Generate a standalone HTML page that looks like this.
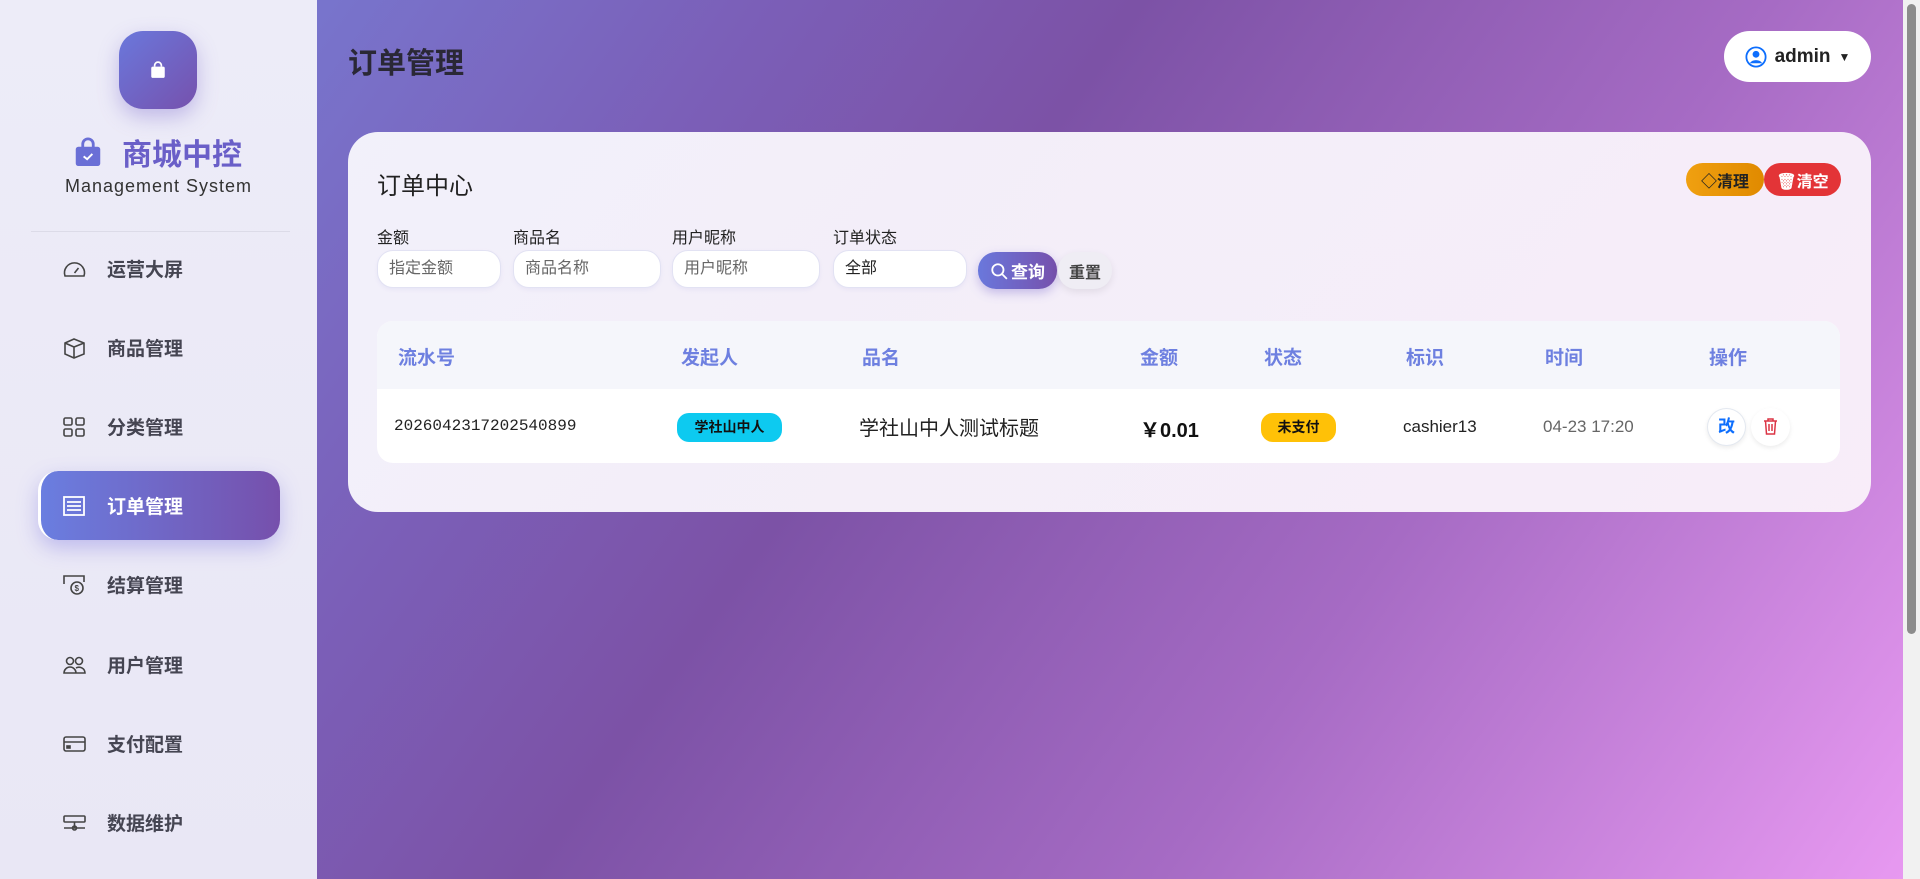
<!DOCTYPE html>
<html><head><meta charset="utf-8"><style>
*{box-sizing:border-box;margin:0;padding:0}
body{width:1920px;height:879px;overflow:hidden;font-family:"Liberation Sans","Noto Sans CJK SC",sans-serif;position:relative;background:linear-gradient(125deg,#7684db 0%,#7b5fb8 30%,#7c52a6 45%,#a66bc4 70%,#e99af2 100%)}
.sb{position:absolute;left:0;top:0;width:317px;height:879px;background:linear-gradient(180deg,#edecf8,#e9e7f5);}
.logo{position:absolute;left:119px;top:31px;width:78px;height:78px;border-radius:24px;background:linear-gradient(135deg,#6a78dc,#7651ad);box-shadow:0 8px 20px rgba(110,90,200,.35)}
.brand{position:absolute;left:74px;top:130px;font-size:30px;font-weight:bold;color:#6a5fc8;display:flex;align-items:center;gap:20px}
.sub{position:absolute;left:0;width:317px;text-align:center;top:176px;font-size:18px;color:#333;letter-spacing:1px}
.div{position:absolute;left:31px;width:259px;top:231px;height:1px;background:#dcdbe8}
.nav{position:absolute;left:38px;width:242px;height:69px;display:flex;align-items:center;font-size:19px;font-weight:bold;color:#454552}
.nav svg{position:absolute;left:24px}
.nav span{position:absolute;left:69px}
.nav.act{background:linear-gradient(90deg,#6a7ee0,#7650ac);color:#fff;border-radius:20px;box-shadow:0 8px 20px rgba(110,100,220,.35);border-left:3px solid #fff}
h1{position:absolute;left:348px;top:40px;font-size:29px;font-weight:bold;color:#2a2836}
.admin{position:absolute;left:1724px;top:31px;width:147px;height:51px;background:#fff;border-radius:26px;display:flex;align-items:center;justify-content:center;gap:8px;font-size:19px;color:#222;font-weight:bold}
.card{position:absolute;left:348px;top:132px;width:1523px;height:380px;border-radius:30px;background:linear-gradient(135deg,rgba(246,245,252,.97),rgba(249,240,250,.97))}
.ct{position:absolute;left:29px;top:34px;font-size:24px;color:#222}
.btn{position:absolute;top:31px;height:33px;border-radius:17px;color:#fff;font-size:16px;font-weight:bold;display:flex;align-items:center;justify-content:center;gap:3px}
.lbl{position:absolute;top:92px;font-size:16px;color:#222}
.inp{position:absolute;top:118px;height:38px;border-radius:16px;background:#fff;border:1px solid #e2e2f3;font-size:16px;color:#666;padding-left:11px;line-height:36px;box-shadow:0 2px 4px rgba(120,110,200,.08)}
.tbl{position:absolute;left:29px;top:189px;width:1463px;height:142px;border-radius:16px;overflow:hidden;background:#fff}
.th{position:absolute;top:0;left:0;right:0;height:68px;background:#f5f6fb}
.th div,.tr div{position:absolute}
.th div{top:22px;font-size:19px;font-weight:bold;color:#6e80e0}
.tr{position:absolute;top:68px;left:0;right:0;height:74px}
</style></head><body>
<div class="sb">
 <div class="logo"><svg style="position:absolute;left:30px;top:30px" width="18" height="18" viewBox="0 0 16 16"><path d="M5 5V4a3 3 0 0 1 6 0v1" fill="none" stroke="#fff" stroke-width="1.5"/><rect x="2" y="5" width="12" height="10" rx="1.5" fill="#fff"/></svg></div>
 <div class="brand"><svg width="28" height="30" viewBox="0 0 16 17"><path d="M5 6V4a3 3 0 0 1 6 0v2" fill="none" stroke="#6a6fd6" stroke-width="1.6"/><rect x="1" y="5.5" width="14" height="11" rx="1.5" fill="#6a6fd6"/><path d="M5.5 11l2 1.6 3-3" fill="none" stroke="#fff" stroke-width="1.1"/></svg><span>商城中控</span></div>
 <div class="sub">Management System</div>
 <div class="div"></div>
 <div class="nav" style="top:234px"><svg width="25" height="20" viewBox="0 0 25 20" fill="none" stroke="#444" stroke-width="1.6"><path d="M3 17a10 10 0 1 1 19 0z"/><path d="M12.5 14l4-5"/></svg><span>运营大屏</span></div>
 <div class="nav" style="top:313px"><svg width="25" height="22" viewBox="0 0 25 22" fill="none" stroke="#444" stroke-width="1.6"><path d="M3 6l9-4 10 4v11l-10 4-9-4z M3 6l9 4 10-4 M12 10v11"/></svg><span>商品管理</span></div>
 <div class="nav" style="top:392px"><svg width="24" height="22" viewBox="0 0 24 22" fill="none" stroke="#444" stroke-width="1.6"><rect x="2" y="2" width="8" height="7" rx="1.5"/><rect x="14" y="2" width="8" height="7" rx="1.5"/><rect x="2" y="13" width="8" height="7" rx="1.5"/><rect x="14" y="13" width="8" height="7" rx="1.5"/></svg><span>分类管理</span></div>
 <div class="nav act" style="top:471px"><svg width="24" height="22" viewBox="0 0 24 22" fill="none" stroke="#fff" stroke-width="1.8" style="left:21px"><rect x="2" y="2" width="20" height="18"/><path d="M5 7h14M5 11h14M5 15h14"/></svg><span style="left:66px">订单管理</span></div>
 <div class="nav" style="top:550px"><svg width="25" height="24" viewBox="0 0 25 24" fill="none" stroke="#444" stroke-width="1.6"><path d="M2 11V3h20v6"/><circle cx="15" cy="15" r="6"/><text x="12.5" y="18" font-size="8" fill="#444" stroke="none">$</text></svg><span>结算管理</span></div>
 <div class="nav" style="top:630px"><svg width="25" height="20" viewBox="0 0 25 20" fill="none" stroke="#444" stroke-width="1.6"><circle cx="8" cy="6" r="3.5"/><circle cx="17" cy="6" r="3.5"/><path d="M2 18a6 6 0 0 1 12 0z M14 18h9a6 6 0 0 0-9-5"/></svg><span>用户管理</span></div>
 <div class="nav" style="top:709px"><svg width="25" height="20" viewBox="0 0 25 20" fill="none" stroke="#444" stroke-width="1.6"><rect x="2" y="3" width="21" height="14" rx="2"/><path d="M2 8h21"/><rect x="5" y="12" width="3" height="2" fill="#444"/></svg><span>支付配置</span></div>
 <div class="nav" style="top:788px"><svg width="25" height="20" viewBox="0 0 25 20" fill="none" stroke="#444" stroke-width="1.6"><rect x="2" y="3" width="21" height="6" rx="1"/><path d="M12.5 9v6M2 15h21"/><circle cx="12.5" cy="15" r="2"/></svg><span>数据维护</span></div>
</div>
<div style="position:absolute;left:1903px;top:0;width:17px;height:879px;background:#f1f1f1"><div style="margin:4px 4px;width:9px;height:630px;border-radius:5px;background:#8c8c8c"></div></div>
<h1>订单管理</h1>
<div class="admin"><svg width="22" height="22" viewBox="0 0 16 16"><circle cx="8" cy="8" r="7" fill="none" stroke="#0d6efd" stroke-width="1.3"/><circle cx="8" cy="6" r="2.5" fill="#0d6efd"/><path d="M3.5 12.5a5 4 0 0 1 9 0" fill="#0d6efd"/></svg>admin<span style="font-size:12px">▼</span></div>
<div class="card">
 <div class="ct">订单中心</div>
 <div class="btn" style="left:1338px;width:78px;background:linear-gradient(90deg,#f0a010,#e08a00);color:#222">◇清理</div>
 <div class="btn" style="left:1416px;width:77px;background:#e33437">🗑清空</div>
 <div class="lbl" style="left:29px">金额</div><div class="inp" style="left:29px;width:124px">指定金额</div>
 <div class="lbl" style="left:165px">商品名</div><div class="inp" style="left:165px;width:148px">商品名称</div>
 <div class="lbl" style="left:324px">用户昵称</div><div class="inp" style="left:324px;width:148px">用户昵称</div>
 <div class="lbl" style="left:485px">订单状态</div><div class="inp" style="left:485px;width:134px;color:#222">全部</div>
 <div class="btn" style="left:630px;top:120px;width:79px;height:37px;border-radius:18px;background:linear-gradient(90deg,#6a78dc,#7650ac);box-shadow:0 4px 10px rgba(110,90,200,.35);font-size:17px"><svg width="18" height="18" viewBox="0 0 16 16" fill="none" stroke="#fff" stroke-width="1.6"><circle cx="7" cy="7" r="5"/><path d="M11 11l4 4"/></svg>查询</div>
 <div class="btn" style="left:710px;top:120px;width:54px;height:37px;border-radius:18px;background:#efedf4;color:#444;font-size:16px;box-shadow:0 3px 8px rgba(0,0,0,.08)">重置</div>
 <div class="tbl">
  <div class="th"><div style="left:21px">流水号</div><div style="left:304px">发起人</div><div style="left:485px">品名</div><div style="left:763px">金额</div><div style="left:887px">状态</div><div style="left:1029px">标识</div><div style="left:1168px">时间</div><div style="left:1332px">操作</div></div>
  <div class="tr">
   <div style="left:17px;top:28px;font-family:'Liberation Mono',monospace;font-size:16px;color:#222">2026042317202540899</div>
   <div style="left:300px;top:24px;width:105px;height:29px;border-radius:12px;background:#0dcaf0;font-size:14px;font-weight:bold;color:#111;text-align:center;line-height:29px">学社山中人</div>
   <div style="left:482px;top:23px;font-size:20px;color:#222">学社山中人测试标题</div>
   <div style="left:763px;top:25px;font-size:20px;font-weight:bold;color:#111">￥0.01</div>
   <div style="left:884px;top:24px;width:75px;height:29px;border-radius:12px;background:#ffc107;font-size:14px;font-weight:bold;color:#111;text-align:center;line-height:29px">未支付</div>
   <div style="left:1026px;top:28px;font-size:17px;color:#222">cashier13</div>
   <div style="left:1166px;top:28px;font-size:17px;color:#666">04-23 17:20</div>
   <div style="left:1330px;top:19px;width:39px;height:38px;border-radius:50%;background:#fff;border:1px solid #e3e8f0;box-shadow:0 2px 5px rgba(0,0,0,.08);color:#0d6efd;font-weight:bold;font-size:17px;text-align:center;line-height:36px">改</div>
   <div style="left:1374px;top:19px;width:39px;height:38px;border-radius:50%;background:#fff;box-shadow:0 2px 5px rgba(0,0,0,.08)"><svg style="margin:10px 12px" width="15" height="17" viewBox="0 0 15 17" fill="none" stroke="#dc3545" stroke-width="1.5"><path d="M1 3h13M5 3V1h5v2M2.5 3l1 13h8l1-13M6 6v7M9 6v7"/></svg></div>
  </div>
 </div>
</div>
</body></html>
